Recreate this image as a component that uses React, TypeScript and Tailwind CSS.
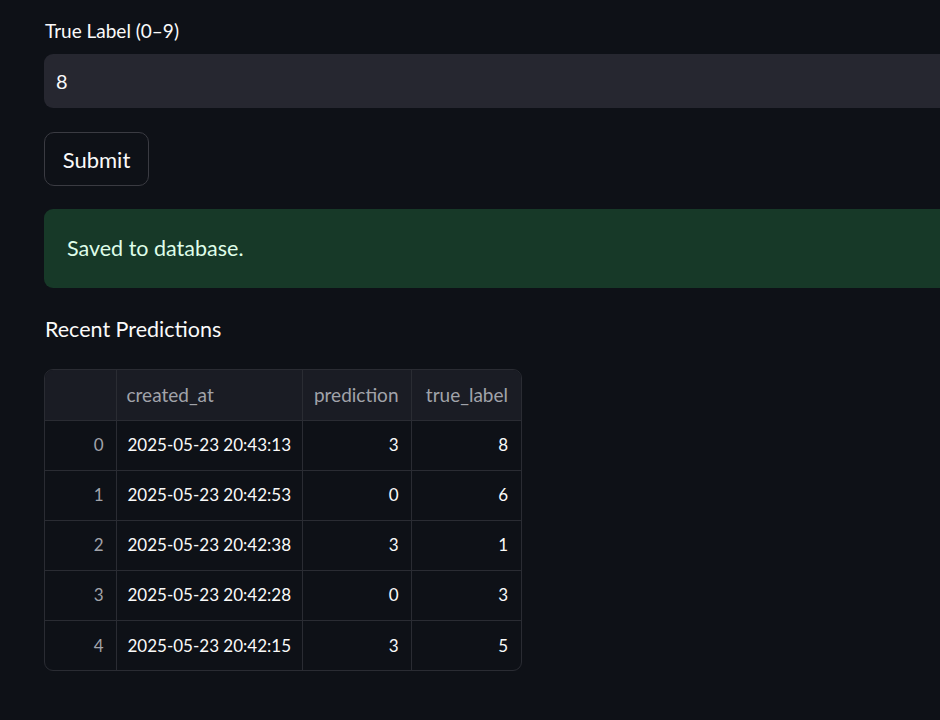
import React from "react";

const rows = [
  { i: 0, created: "2025-05-23 20:43:13", pred: 3, label: 8 },
  { i: 1, created: "2025-05-23 20:42:53", pred: 0, label: 6 },
  { i: 2, created: "2025-05-23 20:42:38", pred: 3, label: 1 },
  { i: 3, created: "2025-05-23 20:42:28", pred: 0, label: 3 },
  { i: 4, created: "2025-05-23 20:42:15", pred: 3, label: 5 },
];

const App = () => {
  return (
    <div
      className="min-h-[720px] w-[940px] overflow-hidden bg-[#0e1117] text-[#fafafa]"
      style={{ fontFamily: "Lato, 'Open Sans', sans-serif" }}
    >
      <div className="pl-[44px] pt-[20px] w-[1100px]">
        <label className="block pl-px text-[19px] leading-[22px]">True Label (0–9)</label>
        <div className="mt-[12px] flex h-[54px] items-center rounded-[9px] bg-[#262730] px-[12px] text-[20px]">
          8
        </div>

        <button className="mt-[24px] h-[54px] w-[105px] rounded-[10px] border border-[#3a3b42] bg-[#0e1117] text-[22px] text-[#fafafa]">
          Submit
        </button>

        <div className="mt-[23px] flex h-[79px] items-center rounded-[9px] bg-[#173928] px-[23px] text-[21.5px] text-[#dffde9]">
          Saved to database.
        </div>

        <h3 className="mt-[29px] pl-px text-[21.5px] leading-[24px]">Recent Predictions</h3>

        <div className="mt-[28px] w-[478px] overflow-hidden rounded-[9px] border border-[#2a2c33]">
          <table className="w-full table-fixed border-collapse text-[17px]">
            <thead>
              <tr className="h-[50px] bg-[#1a1c24] text-[19px] text-[#a1a3aa]">
                <th className="w-[71px] border-r border-b border-[#2a2c33]"></th>
                <th className="w-[186px] border-r border-b border-[#2a2c33] pl-[10px] text-left font-normal">
                  created_at
                </th>
                <th className="w-[109px] border-r border-b border-[#2a2c33] pr-[12px] text-right font-normal">
                  prediction
                </th>
                <th className="border-b border-[#2a2c33] pr-[13px] text-right font-normal">true_label</th>
              </tr>
            </thead>
            <tbody>
              {rows.map((r, idx) => (
                <tr key={r.i} className="h-[50px]">
                  <td
                    className={`border-r border-[#2a2c33] pr-[12px] text-right text-[#a1a3aa] ${
                      idx < rows.length - 1 ? "border-b" : ""
                    }`}
                  >
                    {r.i}
                  </td>
                  <td
                    className={`border-r border-[#2a2c33] pl-[11px] text-left ${
                      idx < rows.length - 1 ? "border-b" : ""
                    }`}
                  >
                    {r.created}
                  </td>
                  <td
                    className={`border-r border-[#2a2c33] pr-[12px] text-right ${
                      idx < rows.length - 1 ? "border-b" : ""
                    }`}
                  >
                    {r.pred}
                  </td>
                  <td
                    className={`border-[#2a2c33] pr-[13px] text-right ${
                      idx < rows.length - 1 ? "border-b" : ""
                    }`}
                  >
                    {r.label}
                  </td>
                </tr>
              ))}
            </tbody>
          </table>
        </div>
      </div>
    </div>
  );
};

export default App;
